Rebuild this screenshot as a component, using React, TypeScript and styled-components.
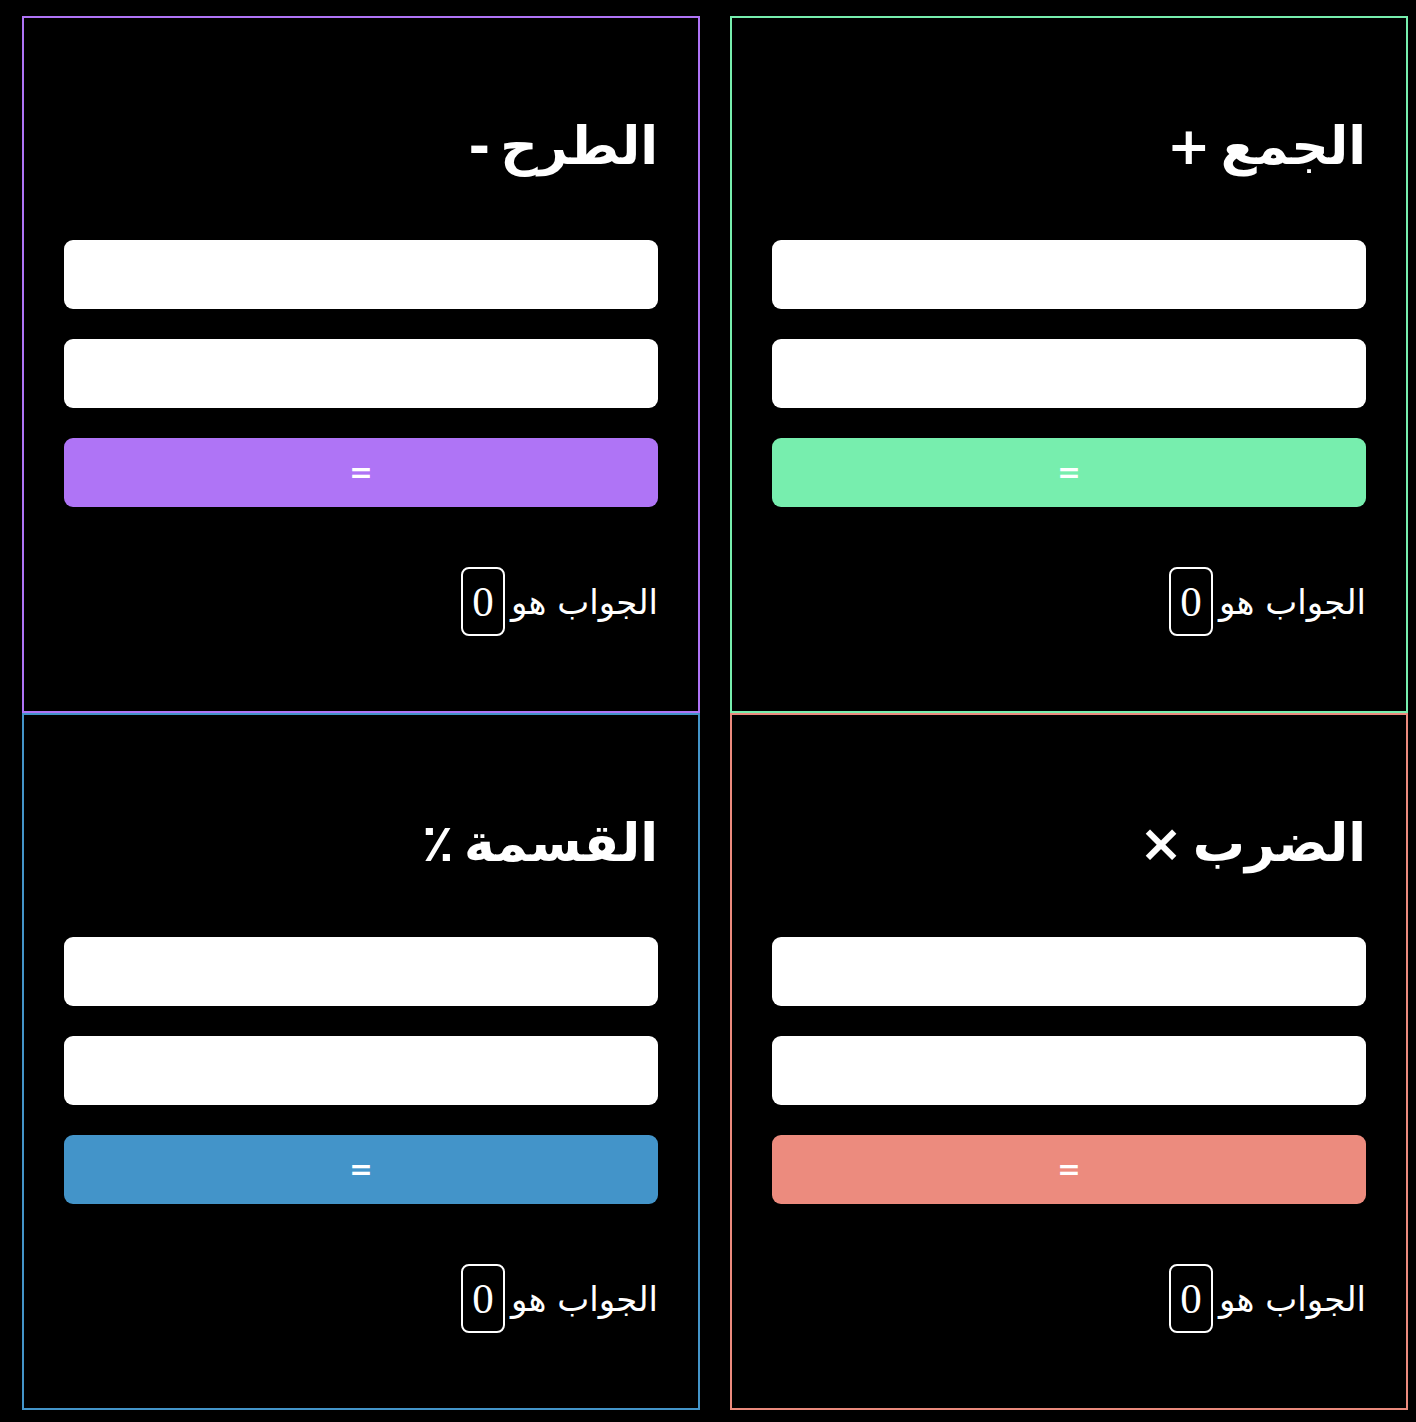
import styled, { createGlobalStyle } from 'styled-components';

const GlobalStyle = createGlobalStyle`
  html, body {
    margin: 0;
    padding: 0;
    background: #000;
  }
  body {
    font-family: "Liberation Serif", "DejaVu Sans", serif;
    color: #fff;
  }
`;

const Page = styled.main`
  direction: rtl;
  display: grid;
  grid-template-columns: 678px 678px;
  column-gap: 30px;
  justify-content: start;
  padding: 16px 8px 13px 22px;
`;

const Card = styled.section<{ $accent: string }>`
  height: 697px;
  box-sizing: border-box;
  border: 2px solid ${(p) => p.$accent};
  padding: 0 40px;
  display: flex;
  flex-direction: column;
`;

const Title = styled.h2`
  margin: 96px 0 0;
  height: 96px;
  font-family: "DejaVu Sans", sans-serif;
  font-size: 52px;
  font-weight: 700;
  line-height: 64px;
  word-spacing: -8px;
`;

const Field = styled.input`
  height: 69px;
  box-sizing: border-box;
  border: none;
  border-radius: 9px;
  background: #fff;
  margin-top: 30px;
  font-size: 24px;
  padding: 0 16px;
  outline: none;
`;

const EqualsButton = styled.button<{ $accent: string }>`
  height: 69px;
  margin-top: 30px;
  border: none;
  border-radius: 9px;
  background: ${(p) => p.$accent};
  color: #fff;
  font-family: "DejaVu Sans", sans-serif;
  font-size: 28px;
  font-weight: 700;
  cursor: pointer;
`;

const Answer = styled.div`
  margin-top: 60px;
  display: flex;
  align-items: center;
  gap: 6px;
  font-family: "DejaVu Sans", sans-serif;
  font-size: 34px;
`;

const ResultBox = styled.span`
  box-sizing: border-box;
  height: 69px;
  min-width: 44px;
  padding: 0 9px;
  border: 2px solid #fff;
  border-radius: 8px;
  display: flex;
  align-items: center;
  justify-content: center;
  font-family: "Liberation Serif", "Times New Roman", serif;
  font-size: 43px;
`;

const ops = [
  { title: 'الجمع +', color: '#77eeae' },
  { title: 'الطرح -', color: '#af74f6' },
  { title: 'الضرب ×', color: '#ec8b7e' },
  { title: 'القسمة ٪', color: '#4394c9' },
];

export default function App() {
  return (
    <>
      <GlobalStyle />
      <Page>
        {ops.map((op) => (
          <Card key={op.title} $accent={op.color}>
            <Title>{op.title}</Title>
            <Field type="number" />
            <Field type="number" />
            <EqualsButton $accent={op.color}>=</EqualsButton>
            <Answer>
              الجواب هو
              <ResultBox>0</ResultBox>
            </Answer>
          </Card>
        ))}
      </Page>
    </>
  );
}
